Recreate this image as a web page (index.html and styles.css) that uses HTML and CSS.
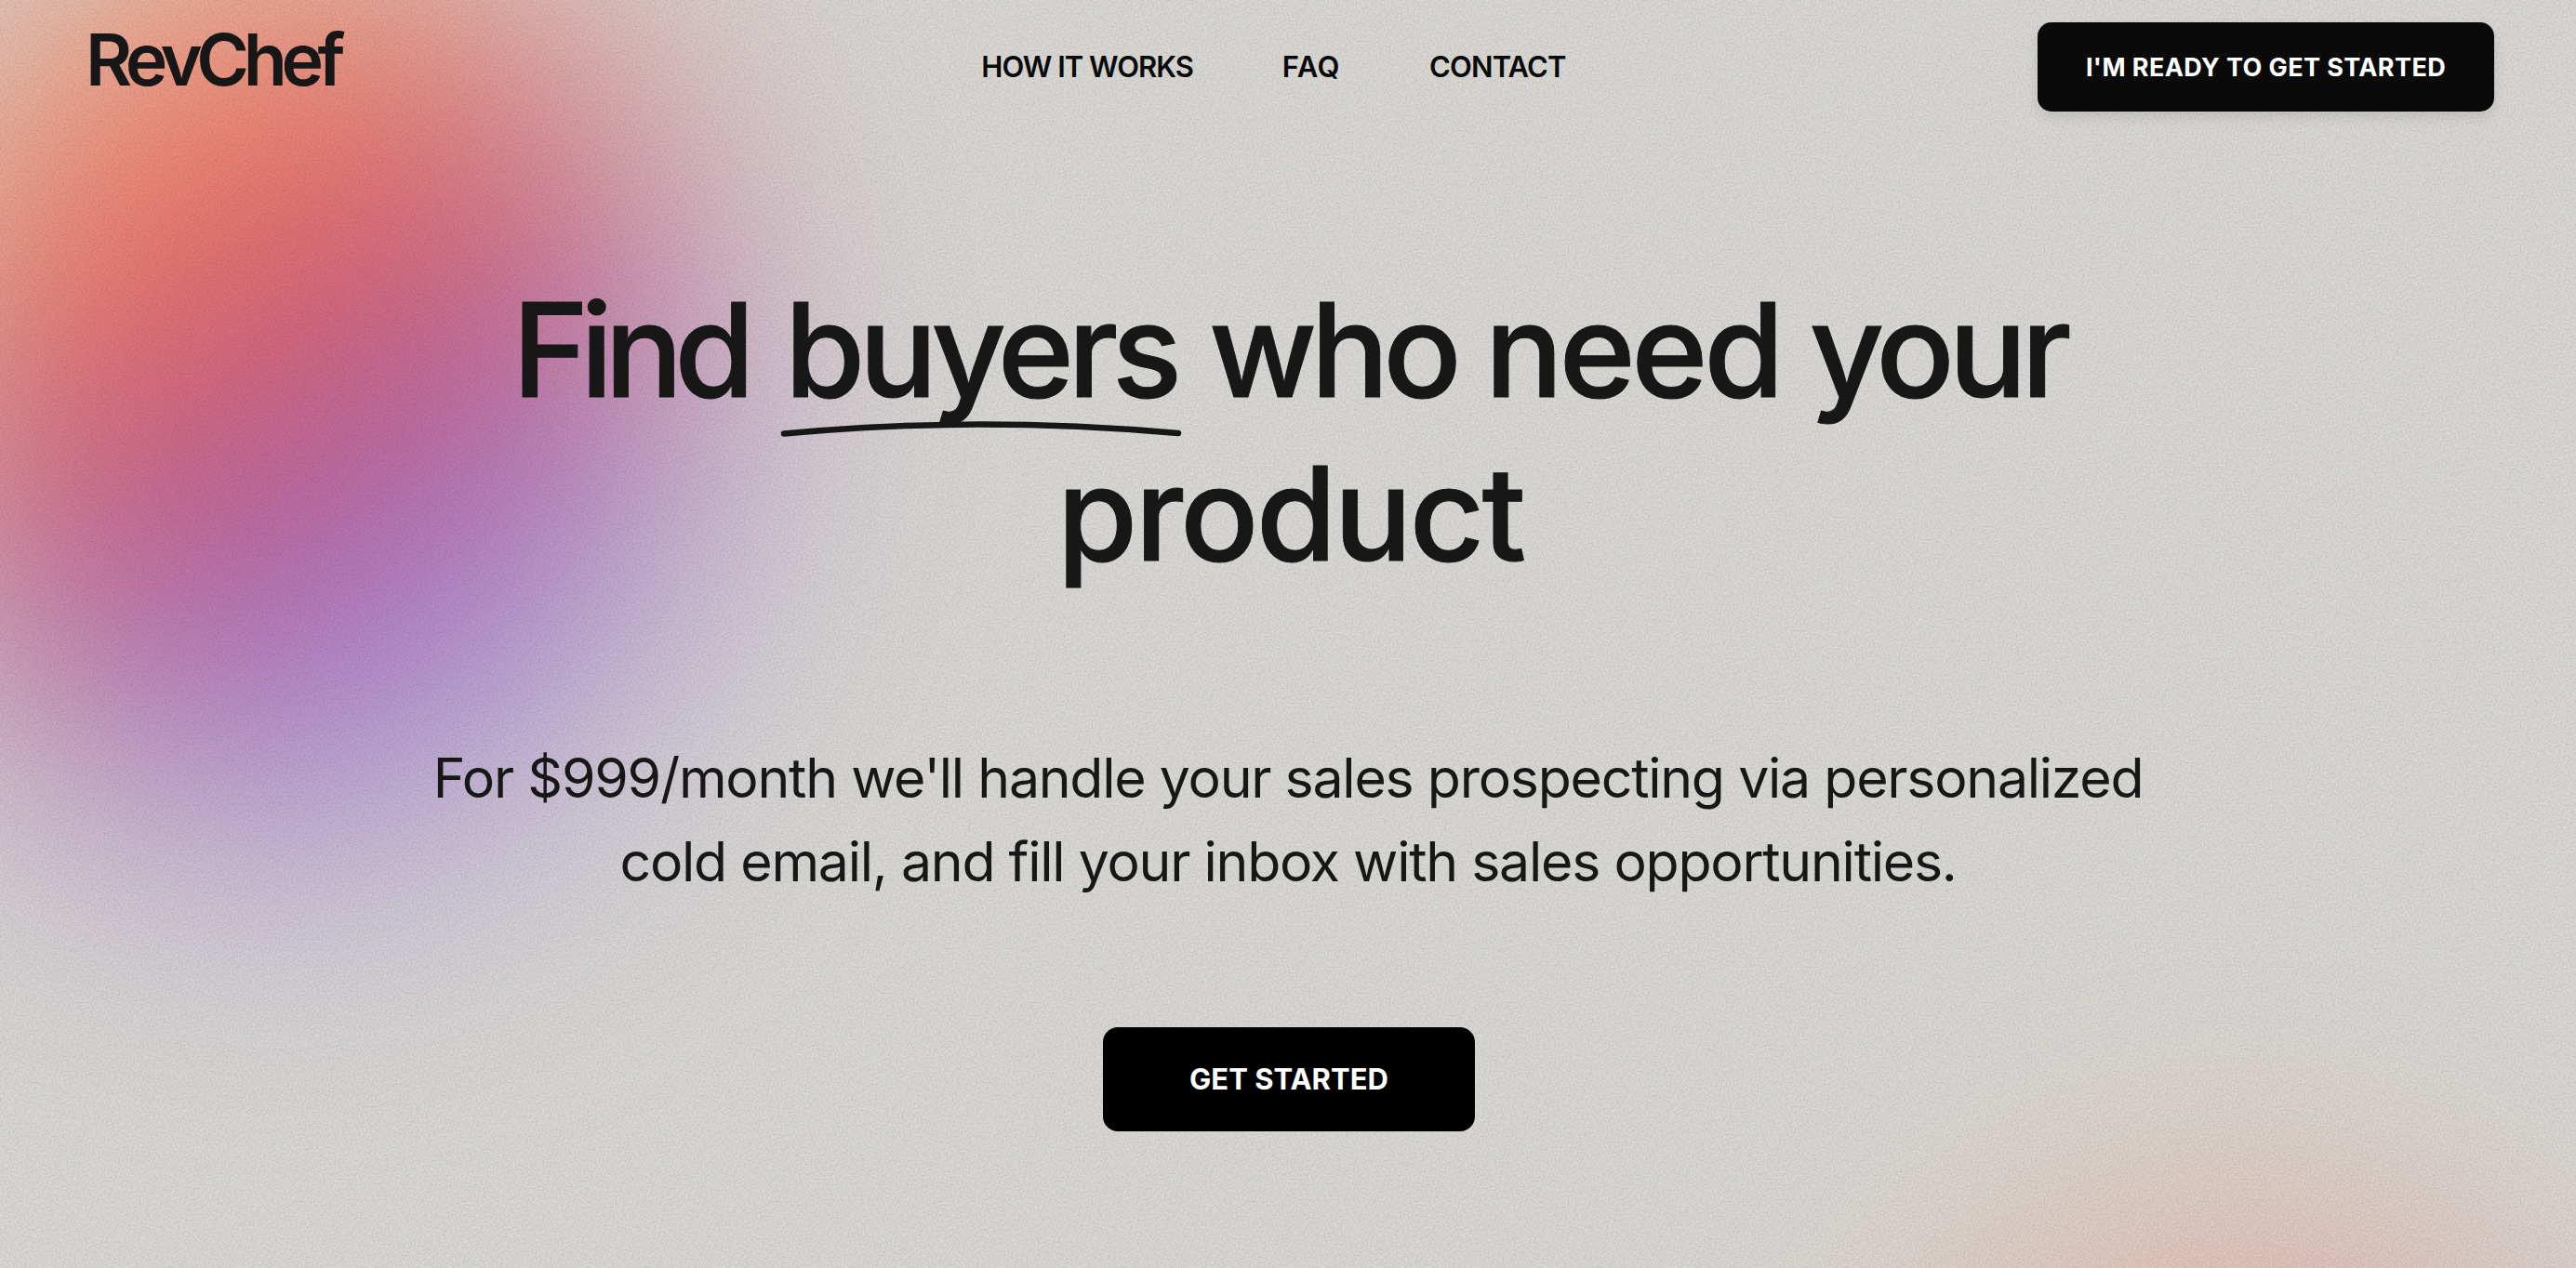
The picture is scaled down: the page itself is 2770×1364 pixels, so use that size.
FILE: index.html
```
<!DOCTYPE html>
<html lang="en">
<head>
    <meta charset="UTF-8">
    <meta name="viewport" content="width=device-width, initial-scale=1.0">
    <title>RevChef</title>
    <link rel="stylesheet" href="styles.css">
</head>
<body>
    <div class="background">
        <div class="blob blob-main"></div>
        <div class="blob blob-corner"></div>
        <svg class="grain" width="100%" height="100%">
            <filter id="noise" x="0" y="0" width="100%" height="100%" color-interpolation-filters="sRGB">
                <feTurbulence type="fractalNoise" baseFrequency="0.5" numOctaves="3" stitchTiles="stitch" />
                <feColorMatrix type="matrix" values="0 0 0 0 0  0 0 0 0 0  0 0 0 0 0  0.18 0 0 0 -0.05" />
            </filter>
            <rect width="100%" height="100%" filter="url(#noise)" />
        </svg>
    </div>

    <header class="header">
        <a class="logo">RevChef</a>
        <nav class="nav">
            <a class="nav-how">HOW IT WORKS</a>
            <a class="nav-faq">FAQ</a>
            <a class="nav-contact">CONTACT</a>
        </nav>
        <a class="button button-header">I'M READY TO GET STARTED</a>
    </header>

    <main class="hero">
        <h1 class="title">
            <span class="word-find">Find</span>
            <span class="underlined">buyers<svg class="underline" viewBox="0 0 432 20"><path d="M4 14.500Q206 -5 428 14" fill="none" stroke="#171717" stroke-width="6.500" stroke-linecap="round" /></svg></span>
            <span class="word-who">who</span>
            <span class="word-need">need</span>
            <span class="word-your">your</span>
            <br>
            <span class="word-product">product</span>
        </h1>
        <p class="subtitle">For $999/month we'll handle your sales prospecting via personalized<br>cold email, and fill your inbox with sales opportunities.</p>
        <a class="button button-hero">GET STARTED</a>
    </main>
</body>
</html>
```
FILE: styles.css
```
* {
    box-sizing: border-box;
}
body {
    margin: 0;
    height: 1364px;
    overflow: hidden;
    font-family: "Inter", Arial, sans-serif;
    color: #171717;
    background-color: #DBDAD6;
}
.background {
    position: absolute;
    top: 0;
    left: 0;
    width: 100%;
    height: 1364px;
    overflow: hidden;
    z-index: -1;
}
.blob {
    position: absolute;
    border-radius: 50%;
}
.blob-main {
    left: -120px;
    top: -70px;
    width: 870px;
    height: 980px;
    background: linear-gradient(150deg, #FF9664 14%, #F47C60 30%, #E0666A 41%, #BE5890 54%, #AA70C0 65%, #AA94DE 78%);
    filter: blur(155px);
}
.blob-corner {
    left: 2010px;
    top: 1290px;
    width: 800px;
    height: 740px;
    background: linear-gradient(140deg, #FF9A62, #F2806A 40%, #C2508C);
    filter: blur(130px);
    opacity: 0.36;
}
.grain {
    position: absolute;
    top: 0;
    left: 0;
}
.header {
    display: grid;
    grid-template-columns: 1fr auto 1fr;
    align-items: center;
    height: 144px;
    padding: 0 88px 0 92px;
}
.logo {
    padding-bottom: 17px;
    font-size: 77px;
    font-weight: 600;
    line-height: 80px;
    letter-spacing: -6.4px;
}
.nav {
    display: flex;
    gap: 96px;
    padding: 0 35px 2px 0;
    font-size: 31px;
    font-weight: 600;
    color: #0A0A0A;
}
.nav-how {
    letter-spacing: -1px;
}
.nav-faq {
    letter-spacing: 0.5px;
}
.nav-contact {
    letter-spacing: -0.85px;
}
.button {
    display: flex;
    align-items: center;
    justify-content: center;
    font-weight: 700;
    color: white;
}
.button-header {
    justify-self: end;
    width: 491px;
    height: 96px;
    font-size: 27px;
    letter-spacing: 0.4px;
    border-radius: 15px;
    background-color: #0A0A0A;
    box-shadow: 0 6px 14px rgba(0, 0, 0, 0.1);
}
.hero {
    display: flex;
    flex-direction: column;
    align-items: center;
    padding-top: 144px;
    text-align: center;
}
.title {
    margin: 0;
    font-size: 140px;
    font-weight: 500;
    line-height: 176px;
    white-space: nowrap;
    -webkit-text-stroke: 1px #171717;
}
.word-find {
    letter-spacing: -9.2px;
}
.underlined {
    position: relative;
    margin-left: 4px;
    letter-spacing: -6.6px;
}
.underline {
    position: absolute;
    left: -5px;
    bottom: -11px;
    width: 432px;
    height: 20px;
}
.word-who {
    margin-left: -2px;
    letter-spacing: -6.5px;
}
.word-need {
    margin-left: -6px;
    letter-spacing: -4.4px;
}
.word-your {
    margin: 0 -2px 0 -6px;
    letter-spacing: -6.3px;
}
.word-product {
    margin-left: 5px;
    letter-spacing: -2.9px;
}
.subtitle {
    margin: 152px 0 133px;
    font-size: 59px;
    font-weight: 400;
    line-height: 90px;
    letter-spacing: -1.25px;
    white-space: nowrap;
}
.button-hero {
    width: 400px;
    height: 112px;
    margin-left: 2px;
    padding-bottom: 1px;
    font-size: 31px;
    border-radius: 16px;
    background-color: black;
}
```
